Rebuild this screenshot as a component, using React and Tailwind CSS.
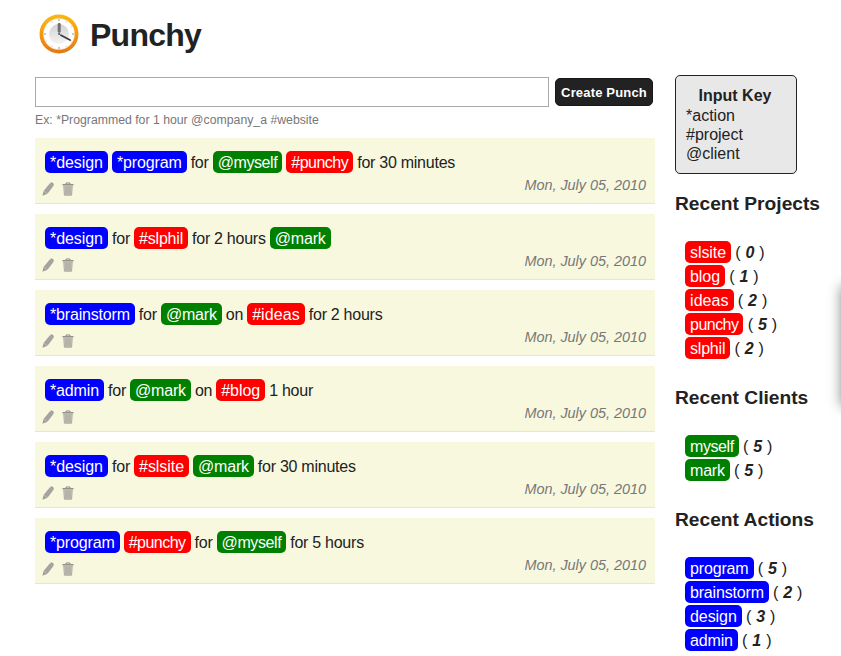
const COLORS = {
  "*": "bg-[#0000ff]",
  "#": "bg-[#ff0000]",
  "@": "bg-[#008000]",
};

const TRACKING = {
  program: "tracking-[-0.15px]",
  myself: "tracking-[-0.41px]",
  punchy: "tracking-[-0.52px]",
  mark: "tracking-[-0.2px]",
  slphil: "tracking-[-0.2px]",
  ideas: "tracking-[0.08px]",
  brainstorm: "tracking-[-0.18px]",
  admin: "tracking-[-0.14px]",
};

const PUNCHES = [
  "*design *program for @myself #punchy for 30 minutes",
  "*design for #slphil for 2 hours @mark",
  "*brainstorm for @mark on #ideas for 2 hours",
  "*admin for @mark on #blog 1 hour",
  "*design for #slsite @mark for 30 minutes",
  "*program #punchy for @myself for 5 hours",
];

const SECTIONS = [
  { title: "Recent Projects", kind: "#", items: [["slsite", 0], ["blog", 1], ["ideas", 2], ["punchy", 5], ["slphil", 2]] },
  { title: "Recent Clients", kind: "@", items: [["myself", 5], ["mark", 5]] },
  { title: "Recent Actions", kind: "*", items: [["program", 5], ["brainstorm", 2], ["design", 3], ["admin", 1]] },
];

function Tag({ kind, children }) {
  const tracking = TRACKING[children.replace(/^[*#@]/, "")] || "tracking-[-0.06px]";
  return <span className={`inline-block h-[22px] rounded-[5px] px-[5px] leading-[23px] text-white ${COLORS[kind]} ${tracking}`}>{children}</span>;
}

function Clock() {
  const ticks = [0, 30, 60, 90, 120, 150, 180, 210, 240, 270, 300, 330];
  return (
    <svg width="40" height="40" viewBox="0 0 40 40">
      <defs>
        <linearGradient id="rim" x1="0" y1="0" x2="0" y2="1">
          <stop offset="0" stopColor="#fbb90b" />
          <stop offset="0.5" stopColor="#f49a12" />
          <stop offset="1" stopColor="#e47712" />
        </linearGradient>
        <linearGradient id="face" x1="0.5" y1="0" x2="0.5" y2="1">
          <stop offset="0" stopColor="#d2d2d2" />
          <stop offset="1" stopColor="#f4f4f4" />
        </linearGradient>
      </defs>
      <circle cx="20" cy="20" r="19.5" fill="url(#rim)" />
      <circle cx="20" cy="20" r="15.8" fill="#fff" stroke="#e8a94b" strokeWidth="0.4" />
      <circle cx="20" cy="20" r="10" fill="url(#face)" />
      {ticks.map((a) => (
        <path key={a} d={a % 90 === 0 ? "M20 5v2" : "M20 5.3v1"} stroke={a % 90 === 0 ? "#8d979e" : "#c0c5c9"} strokeWidth="1" transform={`rotate(${a} 20 20)`} />
      ))}
      <path d="M20.2 10.2v7" stroke="#707070" strokeWidth="3" strokeLinecap="round" />
      <path d="M22 21.3l9 4.7" stroke="#3c3c3c" strokeWidth="1.8" strokeLinecap="round" />
      <circle cx="20.2" cy="20" r="1.1" fill="#555" />
    </svg>
  );
}

function Pencil() {
  return (
    <svg width="12" height="14" viewBox="0 0 12 14">
      <path d="M8.2 1l1.3-.8 2.3 1.7-.6 2.3z" fill="#92928e" />
      <path d="M7.9 1.2l3.5 2.8-5.7 7.6L1.6 9z" fill="#a3a3a0" />
      <path d="M1.6 9l4 2.7-5.2 2.1z" fill="#a0a09b" />
    </svg>
  );
}

function Trash() {
  return (
    <svg width="12" height="14" viewBox="0 0 12 14">
      <path d="M4 2V1h4v1" fill="none" stroke="#8a8a83" />
      <path d="M.5 2h11v1.5H.5z" fill="#92928b" />
      <path d="M1.8 4.2h8.4l-.6 9H2.4z" fill="#d2d2c4" stroke="#a2a29a" strokeWidth=".9" />
      <path d="M4 5v7.5M6 5v7.5M8 5v7.5" stroke="#8f8f88" strokeWidth=".9" />
    </svg>
  );
}

function Punch({ text }) {
  return (
    <li className="flex h-[66px] flex-col border-b border-[#e5e5e0] bg-[#f8f8df] pr-[9px]">
      <p className="mt-[13px] h-6 pl-[10px] leading-6 tracking-[-0.22px] [word-spacing:-0.2px]">
        {text.split(" ").map((word, i) => (
          <span key={i}>
            {i > 0 && " "}
            {COLORS[word[0]] ? <Tag kind={word[0]}>{word}</Tag> : word}
          </span>
        ))}
      </p>
      <div className="flex justify-between pl-[7px]">
        <div className="flex gap-2 pt-[7px]">
          <Pencil />
          <Trash />
        </div>
        <em className="text-[14.4px] leading-5 text-[#777]">Mon, July 05, 2010</em>
      </div>
    </li>
  );
}

export default function App() {
  return (
    <div className="relative h-[656px] w-[841px] overflow-hidden bg-white font-['Liberation_Sans',Arial,sans-serif] text-base text-[#222]">
      <header className="flex h-[75px] gap-[11px] pl-[39px] pt-[14px]">
        <Clock />
        <h1 className="text-[32px] font-bold leading-[42px] tracking-[-0.75px]">Punchy</h1>
      </header>
      <div className="flex gap-5 pl-[35px]">
        <main className="w-[620px]">
          <form className="flex gap-[6px] pt-[2px]">
            <input className="h-[30px] w-[514px] border border-[#a9a9ae] bg-white" />
            <button type="button" className="mt-px h-7 w-[98px] rounded-[5px] border border-[#181818] bg-[#222] pt-px text-[13px] font-bold tracking-[0.17px] whitespace-nowrap text-white">
              Create Punch
            </button>
          </form>
          <p className="mt-1 h-[27px] text-[12.28px] leading-[18px] text-[#777]">Ex: *Programmed for 1 hour @company_a #website</p>
          <ul className="flex flex-col gap-[10px]">
            {PUNCHES.map((t) => <Punch key={t} text={t} />)}
          </ul>
        </main>
        <aside className="w-[166px]">
          <div className="h-[99px] w-[122px] rounded-[5px] border border-[#222] bg-[#e8e8e8] px-[10px] pt-[10px] leading-[19px]">
            <h2 className="mb-px pr-[2px] text-center font-bold">Input Key</h2>
            <p>*action</p>
            <p>#project</p>
            <p>@client</p>
          </div>
          {SECTIONS.map((s) => (
            <section key={s.title} className="pt-[18px]">
              <h3 className="mb-[26px] text-[19.2px] font-bold leading-[23px]">{s.title}</h3>
              <ul className="mb-[7px] pl-[10px]">
                {s.items.map(([name, count]) => (
                  <li key={name} className="h-6 leading-6 [word-spacing:-0.3px]">
                    <Tag kind={s.kind}>{name}</Tag> ( <em className="px-[0.8px] font-bold">{count}</em> )
                  </li>
                ))}
              </ul>
            </section>
          ))}
        </aside>
      </div>
      <div className="absolute left-[842px] top-[287px] h-[118px] w-10 shadow-[0_0_12px_1px_rgba(0,0,0,0.45)]" />
    </div>
  );
}
